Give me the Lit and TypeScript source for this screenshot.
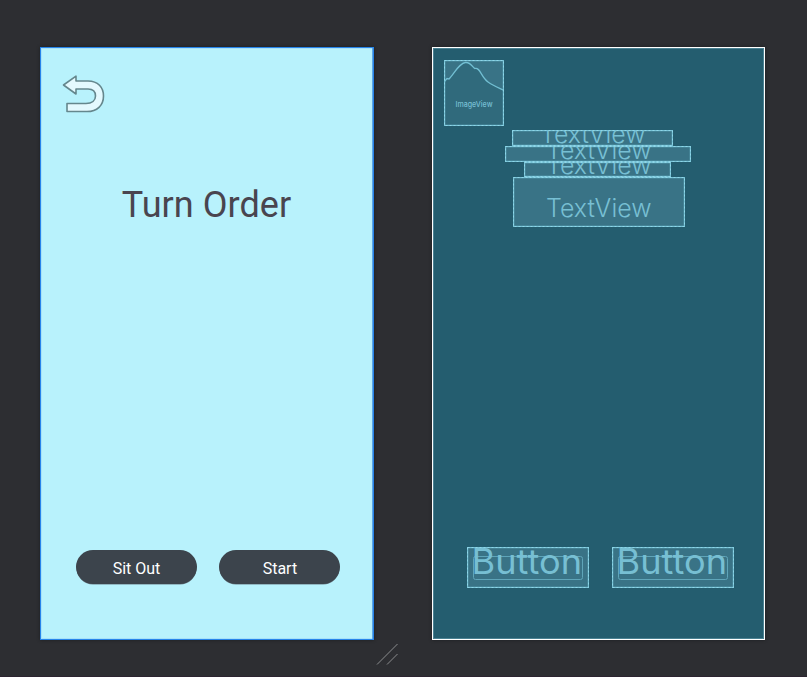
import { LitElement, html, svg, css } from "lit";
import { customElement, property } from "lit/decorators.js";

@customElement("blueprint-box")
class BlueprintBox extends LitElement {
  @property({ type: Number }) w = 100;
  @property({ type: Number }) h = 20;
  @property() label = "";
  @property({ type: Number }) size = 25;
  @property({ type: Number }) tx = 0;
  @property({ type: Number }) ty = 0;
  @property({ type: Number }) tw = 0;
  @property() kind = "text";

  static styles = css`
    :host { display: block; flex: none; }
    svg { display: block; overflow: hidden; }
    .fill { fill: #397386; }
    .line { fill: none; stroke: #74c0d4; stroke-width: 1.400; }
    .dash { fill: none; stroke: #8fd6e8; stroke-dasharray: 2 2; }
    .inner { fill: none; stroke: #5fa5b9; }
    .curve { fill: none; stroke: #72bfd3; stroke-width: 1.300; }
    .shade { fill: #306a7c; }
    text { font-family: Inter, "Liberation Sans", sans-serif; fill: #77bfd3; font-weight: 350; }
    .image text { font-weight: 500; }
    .button text { font-weight: 380; }
  `;

  render() {
    const { w, h } = this;
    const curve = "M0 22 L3 18.5 L5 19 C10 14 15 3 21.5 2.5 C27 2 29 8 31 8.5 C36 7 37 17 44 22 C49 25.500 55 28 60 30.500";
    return html`<svg class=${this.kind} width=${w} height=${h}>
      <rect class="fill" width=${w} height=${h}></rect>
      ${this.kind === "image"
        ? svg`<path class="shade" d="${curve} V66 H0 Z"></path><path class="curve" d=${curve}></path>`
        : null}
      ${this.kind === "button"
        ? svg`<rect class="inner" x="6.500" y="9.500" width="109" height="23" rx="2"></rect>`
        : null}
      <text x=${this.tx} y=${this.ty} font-size=${this.size} textLength=${this.tw} lengthAdjust="spacingAndGlyphs">${this.label}</text>
      <rect class="line" x=".5" y=".5" width=${w - 1} height=${h - 1}></rect>
      <rect class="dash" x=".5" y=".5" width=${w - 1} height=${h - 1}></rect>
    </svg>`;
  }
}

@customElement("app-root")
class AppRoot extends LitElement {
  static styles = css`
    :host {
      display: flex; flex-direction: column; box-sizing: border-box;
      width: 807px; height: 677px; overflow: hidden; background: #2d2e32;
    }
    .surface { display: flex; gap: 58px; padding: 47px 0 0 40px; height: 593px; }
    .panel { box-sizing: border-box; height: 593px; display: flex; flex-direction: column; }
    .design { width: 334px; background: #b8f2fc; border: 1px solid #2684ea; box-shadow: inset -1px 0 #5ba6e6, inset 0 0 0 1px #a6e2f8, 0 0 3px #1c1d20; }
    .blueprint { width: 333px; background: #245d6f; border: 1px solid #fff; box-shadow: inset 0 0 0 1px #4b8293, 0 0 3px #1c1d20; }
    .back { display: block; margin: 26px 0 0 20px; width: 48px; height: 42px; }
    .title {
      margin: 67px 1px 0 0; text-align: center; white-space: nowrap; color: #49454f;
      font: 400 36px/44px Roboto, sans-serif; letter-spacing: 0.050px;
    }
    .actions { display: flex; gap: 22.500px; margin: auto 0 55px 35px; }
    .pill {
      width: 121px; height: 34px; border: 0; padding: 4px 0 0; border-radius: 18px;
      background: #3c444c; color: #fff; font: 400 16px/20px Roboto, sans-serif;
      box-shadow: 0 1px 0 -0.500px #6b7f88;
    }
    .pill + .pill { margin-left: -0.100px; }
    .photo { margin: 12px 0 0 11px; }
    .labels { display: flex; flex-direction: column; align-items: flex-start; margin-top: 4px; }
    .l1 { margin-left: 79px; }
    .l2 { margin-left: 72px; }
    .l3 { margin-left: 91px; }
    .l4 { margin-left: 80px; }
    .buttons { display: flex; gap: 23px; margin: auto 0 51px 34px; }
    .footer { flex: 1; padding: 4px 0 0 376px; border-bottom: 1px solid #2c2430; }
    .grip { display: block; }
  `;

  render() {
    return html`
      <div class="surface">
        <div class="panel design">
          <svg class="back" viewBox="61 74 48 42">
            <path d="M63.500 85 L76 76.200 V81 H88 C98 81 103.500 87.500 103.500 96 C103.500 105.500 97 111.500 87 111.500 H67 V103.500 H86 C92 103.500 95.500 100.500 95.500 96 C95.500 91.500 92.500 89 88 89 H76 V94 Z"
              fill="#e4f9fe" stroke="#65878d" stroke-width="1.600" stroke-linejoin="round"></path>
          </svg>
          <h1 class="title">Turn Order</h1>
          <div class="actions">
            <button class="pill">Sit Out</button>
            <button class="pill">Start</button>
          </div>
        </div>
        <div class="panel blueprint">
          <blueprint-box class="photo" kind="image" w="60" h="66" label="ImageView" size="8" tx="11.500" ty="47" tw="37"></blueprint-box>
          <div class="labels">
            <blueprint-box class="l1" w="161" h="16" label="TextView" tx="28" ty="13" tw="105.500"></blueprint-box>
            <blueprint-box class="l2" w="186" h="16" label="TextView" tx="41" ty="13" tw="105.500"></blueprint-box>
            <blueprint-box class="l3" w="147" h="15" label="TextView" tx="22" ty="12" tw="105.500"></blueprint-box>
            <blueprint-box class="l4" w="172" h="50" label="TextView" tx="33" ty="40" tw="105.500"></blueprint-box>
          </div>
          <div class="buttons">
            <blueprint-box kind="button" w="122" h="41" label="Button" size="35" tx="4.500" ty="27" tw="110.500"></blueprint-box>
            <blueprint-box kind="button" w="122" h="41" label="Button" size="35" tx="4.500" ty="27" tw="110.500"></blueprint-box>
          </div>
        </div>
      </div>
      <div class="footer">
        <svg class="grip" width="24" height="24">
          <path d="M1 20.500 L21.500 0 M11 20.500 L21.500 10" stroke="#8b8c8e" fill="none"></path>
        </svg>
      </div>
    `;
  }
}
